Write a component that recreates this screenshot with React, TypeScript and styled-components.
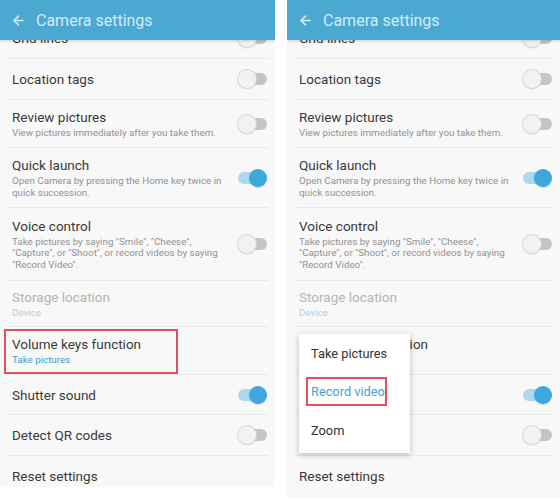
import styled, { createGlobalStyle } from 'styled-components';
import { ArrowLeft } from 'lucide-react';

type Item = {
  title: string;
  sub?: string;
  h: number;
  toggle?: 'on' | 'off';
  disabled?: boolean;
  accent?: boolean;
  marked?: boolean;
};

const items: Item[] = [
  { title: 'Grid lines', h: 41, toggle: 'off' },
  { title: 'Location tags', h: 41, toggle: 'off' },
  { title: 'Review pictures', sub: 'View pictures immediately after you take them.', h: 48, toggle: 'off' },
  { title: 'Quick launch', sub: 'Open Camera by pressing the Home key twice in quick succession.', h: 60, toggle: 'on' },
  {
    title: 'Voice control',
    sub: 'Take pictures by saying "Smile", "Cheese", "Capture", or "Shoot", or record videos by saying "Record Video".',
    h: 73,
    toggle: 'off',
  },
  { title: 'Storage location', sub: 'Device', h: 46, disabled: true },
  { title: 'Volume keys function', sub: 'Take pictures', h: 48, accent: true, marked: true },
  { title: 'Shutter sound', h: 40, toggle: 'on' },
  { title: 'Detect QR codes', h: 41, toggle: 'off' },
  { title: 'Reset settings', h: 40 },
];

const GlobalStyle = createGlobalStyle`
  body {
    margin: 0;
    background: #fff;
    font-family: Roboto, 'Noto Sans', sans-serif;
  }
`;

const Screens = styled.div`
  display: flex;
  gap: 12px;
  width: 560px;
  height: 501px;
`;

const Phone = styled.div<{ $w: number; $h: number }>`
  position: relative;
  width: ${(p) => p.$w}px;
  height: ${(p) => p.$h}px;
  background: #f8f8f8;
  display: flex;
  flex-direction: column;
  overflow: hidden;
`;

const Header = styled.div`
  position: relative;
  z-index: 1;
  height: 40px;
  flex-shrink: 0;
  background: #4aa8d1;
  box-shadow: 0 1px 3px rgba(0, 0, 0, 0.18);
  display: flex;
  align-items: center;
  gap: 10px;
  padding-left: 11px;
  color: #d3ecf7;
  font-size: 16px;
`;

const Body = styled.div`
  flex: 1;
  overflow: hidden;
`;

const List = styled.div`
  margin-top: -22px;
`;

const Row = styled.div<{ $h: number }>`
  position: relative;
  height: ${(p) => p.$h}px;
  margin: 0 6px 0 8px;
  padding: 0 2px 0 4px;
  display: flex;
  align-items: center;
  justify-content: space-between;
  border-bottom: 1px solid #e8e8e8;
  box-sizing: border-box;

  &:last-child {
    border-bottom: none;
  }
`;

const Texts = styled.div`
  max-width: 218px;
`;

const Title = styled.div<{ $disabled?: boolean }>`
  font-size: 13.5px;
  line-height: 16px;
  color: ${(p) => (p.$disabled ? '#b4b4b4' : '#3a3a3a')};
`;

const Sub = styled.div<{ $tone: 'grey' | 'accent' | 'faint' }>`
  font-size: 9.8px;
  line-height: 11.5px;
  margin-top: 2px;
  color: ${(p) => (p.$tone === 'accent' ? '#3f9cc6' : p.$tone === 'faint' ? '#acd4e6' : '#929292')};
`;

const Switch = styled.div<{ $on: boolean }>`
  position: relative;
  width: 29px;
  height: 18px;
  flex-shrink: 0;

  &::before {
    content: '';
    position: absolute;
    top: 3px;
    left: ${(p) => (p.$on ? '0' : '6px')};
    width: 23px;
    height: 12px;
    border-radius: 6px;
    background: ${(p) => (p.$on ? '#acd9ee' : '#c4c4c4')};
  }

  &::after {
    content: '';
    position: absolute;
    top: 0;
    left: ${(p) => (p.$on ? '11px' : '0')};
    width: 18px;
    height: 18px;
    border-radius: 50%;
    background: ${(p) => (p.$on ? '#3ea7dc' : '#f2f2f2')};
    box-shadow: ${(p) => (p.$on ? '0 1px 1px rgba(0,0,0,0.15)' : '0 0 0 1px #d8d8d8, 0 1px 2px rgba(0,0,0,0.18)')};
  }
`;

const Mark = styled.div`
  position: absolute;
  left: -4px;
  top: 2px;
  width: 174px;
  height: 45px;
  border: 2px solid #e4505a;
  box-sizing: border-box;
`;

const Menu = styled.div`
  position: absolute;
  z-index: 2;
  left: 12px;
  top: 334px;
  width: 111px;
  padding-bottom: 3px;
  background: #fff;
  box-shadow: 0 2px 6px rgba(0, 0, 0, 0.25);
  display: flex;
  flex-direction: column;
`;

const MenuItem = styled.div<{ $active?: boolean }>`
  position: relative;
  height: 38.5px;
  display: flex;
  align-items: center;
  padding-left: 12px;
  font-size: 12.8px;
  color: ${(p) => (p.$active ? '#4aa3c9' : '#333')};
`;

const ItemMark = styled.div`
  position: absolute;
  left: 7px;
  top: 4.5px;
  width: 81px;
  height: 29px;
  border: 2px solid #e4505a;
  box-sizing: border-box;
`;

const SettingsList = ({ markRow }: { markRow: boolean }) => (
  <List>
    {items.map((it) => (
      <Row key={it.title} $h={it.h}>
        {markRow && it.marked && <Mark />}
        <Texts>
          <Title $disabled={it.disabled}>{it.title}</Title>
          {it.sub && (
            <Sub $tone={it.accent ? 'accent' : it.disabled ? 'faint' : 'grey'}>{it.sub}</Sub>
          )}
        </Texts>
        {it.toggle && <Switch $on={it.toggle === 'on'} />}
      </Row>
    ))}
  </List>
);

const Screen = ({ w, h, withMenu }: { w: number; h: number; withMenu?: boolean }) => (
  <Phone $w={w} $h={h}>
    <Header>
      <ArrowLeft size={15} strokeWidth={2.6} />
      <span>Camera settings</span>
    </Header>
    <Body>
      <SettingsList markRow={!withMenu} />
    </Body>
    {withMenu && (
      <Menu>
        <MenuItem>Take pictures</MenuItem>
        <MenuItem $active>
          <ItemMark />
          Record video
        </MenuItem>
        <MenuItem>Zoom</MenuItem>
      </Menu>
    )}
  </Phone>
);

export default function App() {
  return (
    <>
      <GlobalStyle />
      <Screens>
        <Screen w={275} h={487} />
        <Screen w={273} h={497} withMenu />
      </Screens>
    </>
  );
}
